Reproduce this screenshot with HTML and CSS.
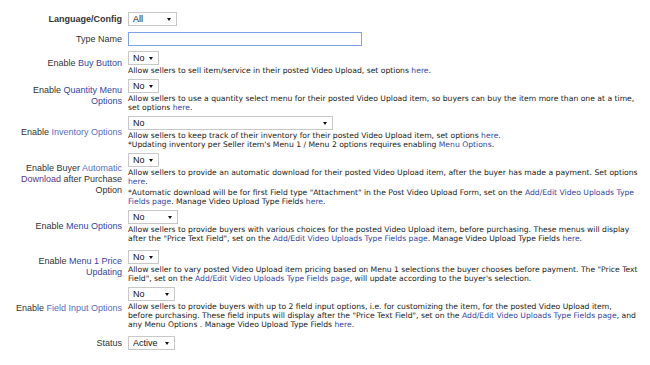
FILE: index.html
```html
<!DOCTYPE html>
<html lang="en">
<head>
  <meta charset="UTF-8">
  <title>Video Upload Type</title>
  <link rel="stylesheet" href="styles.css">
</head>
<body>
  <table class="type-form">
    <tr class="top-row">
      <td class="label"><b>Language/Config</b></td>
      <td class="field">
        <span class="select w-all"><select><option>All</option></select></span>
      </td>
    </tr>
    <tr class="top-row">
      <td class="label">Type Name</td>
      <td class="field"><input type="text" class="text-input"></td>
    </tr>
    <tr>
      <td class="label">Enable <a href="#">Buy Button</a></td>
      <td class="field">
        <span class="select w-no"><select><option>No</option></select></span>
        <div class="desc">Allow sellers to sell item/service in their posted Video Upload, set options <a href="#">here</a>.</div>
      </td>
    </tr>
    <tr>
      <td class="label">Enable <a href="#">Quantity Menu Options</a></td>
      <td class="field">
        <span class="select w-no"><select><option>No</option></select></span>
        <div class="desc">Allow sellers to use a quantity select menu for their posted Video Upload item, so buyers can buy the item more than one at a time, set options <a href="#">here</a>.</div>
      </td>
    </tr>
    <tr>
      <td class="label">Enable <a href="#" class="light">Inventory Options</a></td>
      <td class="field">
        <span class="select w-wide"><select><option>No</option></select></span>
        <div class="desc">Allow sellers to keep track of their inventory for their posted Video Upload item, set options <a href="#">here</a>.<br>
        *Updating inventory per Seller item's Menu 1 / Menu 2 options requires enabling <a href="#">Menu Options</a>.</div>
      </td>
    </tr>
    <tr>
      <td class="label">Enable Buyer <a href="#" class="light">Automatic</a> <a href="#" class="visited">Download</a> after Purchase Option</td>
      <td class="field">
        <span class="select w-no"><select><option>No</option></select></span>
        <div class="desc">Allow sellers to provide an automatic download for their posted Video Upload item, after the buyer has made a payment. Set options <a href="#">here</a>.</div>
        <div class="desc note">*Automatic download will be for first Field type "Attachment" in the Post Video Upload Form, set on the <a href="#">Add/Edit Video Uploads Type Fields page</a>. Manage Video Upload Type Fields <a href="#">here</a>.</div>
      </td>
    </tr>
    <tr>
      <td class="label">Enable <a href="#">Menu Options</a></td>
      <td class="field">
        <span class="select w-menu"><select><option>No</option></select></span>
        <div class="desc">Allow sellers to provide buyers with various choices for the posted Video Upload item, before purchasing. These menus will display after the "Price Text Field", set on the <a href="#">Add/Edit Video Uploads Type Fields page</a>. Manage Video Upload Type Fields <a href="#">here</a>.</div>
      </td>
    </tr>
    <tr class="spaced">
      <td class="label">Enable <a href="#">Menu 1 Price Updating</a></td>
      <td class="field">
        <span class="select w-no"><select><option>No</option></select></span>
        <div class="desc">Allow seller to vary posted Video Upload item pricing based on Menu 1 selections the buyer chooses before payment. The "Price Text Field", set on the <a href="#">Add/Edit Video Uploads Type Fields page</a>, will update according to the buyer's selection.</div>
      </td>
    </tr>
    <tr>
      <td class="label">Enable <a href="#" class="light">Field Input Options</a></td>
      <td class="field">
        <span class="select w-field"><select><option>No</option></select></span>
        <div class="desc">Allow sellers to provide buyers with up to 2 field input options, i.e. for customizing the item, for the posted Video Upload item, before purchasing. These field inputs will display after the "Price Text Field", set on the <a href="#">Add/Edit Video Uploads Type Fields page</a>, and any Menu Options . Manage Video Upload Type Fields <a href="#">here</a>.</div>
      </td>
    </tr>
    <tr class="spaced">
      <td class="label">Status</td>
      <td class="field">
        <span class="select w-field"><select><option>Active</option></select></span>
      </td>
    </tr>
  </table>
</body>
</html>
```

FILE: styles.css
```css
* {
  margin: 0;
  padding: 0;
  box-sizing: border-box;
}

body {
  background: #fff;
  padding: 9px 0 0 8px;
  font-family: "Liberation Sans", Arial, sans-serif;
  font-size: 9px;
  color: #333;
}

a {
  color: #3346a6;
  text-decoration: none;
}

a.light {
  color: #5a6cc4;
}

a.visited {
  color: #55358c;
}

.type-form {
  width: 630px;
  table-layout: fixed;
  border-collapse: collapse;
}

.type-form td {
  padding-top: 2px;
  padding-bottom: 2px;
}

.type-form .top-row td {
  padding-top: 3px;
  padding-bottom: 3px;
}

.type-form .spaced td {
  padding-top: 5px;
}

.type-form .label {
  width: 120px;
  padding-right: 6px;
  text-align: right;
  vertical-align: middle;
  line-height: 11px;
}

.type-form .field {
  width: 510px;
  vertical-align: top;
}

.select {
  position: relative;
  display: inline-block;
  height: 14px;
  vertical-align: top;
}

.select select {
  appearance: none;
  -webkit-appearance: none;
  width: 100%;
  height: 14px;
  border: 1px solid #c8c8c8;
  border-radius: 0;
  background: #fff;
  padding: 0 0 0 4px;
  font-family: "Liberation Sans", Arial, sans-serif;
  font-size: 9px;
  color: #111;
  line-height: 12px;
}

.select::after {
  content: "";
  position: absolute;
  right: 6px;
  top: 6px;
  border-left: 2px solid transparent;
  border-right: 2px solid transparent;
  border-top: 3px solid #111;
  pointer-events: none;
}

.w-all { width: 49px; }
.w-no { width: 31px; }
.w-wide { width: 205px; }
.w-menu { width: 50px; }
.w-field { width: 47px; }

.text-input {
  display: block;
  width: 234px;
  height: 14px;
  border: 1px solid #7fa2e6;
  outline: none;
}

.desc {
  margin-top: 1px;
  font-family: "DejaVu Sans", Verdana, sans-serif;
  font-size: 7.65px;
  line-height: 9px;
  color: #222;
}

.desc.note {
  margin-top: 2px;
}
```
